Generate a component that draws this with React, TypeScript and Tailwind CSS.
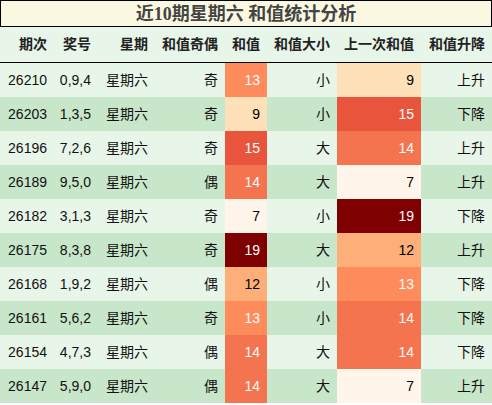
import React from "react";

type Row = {
  issue: string;
  nums: string;
  week: string;
  parity: string;
  sum: number;
  size: string;
  prev: number;
  trend: string;
};

const rows: Row[] = [
  { issue: "26210", nums: "0,9,4", week: "星期六", parity: "奇", sum: 13, size: "小", prev: 9, trend: "上升" },
  { issue: "26203", nums: "1,3,5", week: "星期六", parity: "奇", sum: 9, size: "小", prev: 15, trend: "下降" },
  { issue: "26196", nums: "7,2,6", week: "星期六", parity: "奇", sum: 15, size: "大", prev: 14, trend: "上升" },
  { issue: "26189", nums: "9,5,0", week: "星期六", parity: "偶", sum: 14, size: "大", prev: 7, trend: "上升" },
  { issue: "26182", nums: "3,1,3", week: "星期六", parity: "奇", sum: 7, size: "小", prev: 19, trend: "下降" },
  { issue: "26175", nums: "8,3,8", week: "星期六", parity: "奇", sum: 19, size: "大", prev: 12, trend: "上升" },
  { issue: "26168", nums: "1,9,2", week: "星期六", parity: "偶", sum: 12, size: "小", prev: 13, trend: "下降" },
  { issue: "26161", nums: "5,6,2", week: "星期六", parity: "奇", sum: 13, size: "小", prev: 14, trend: "下降" },
  { issue: "26154", nums: "4,7,3", week: "星期六", parity: "偶", sum: 14, size: "大", prev: 14, trend: "下降" },
  { issue: "26147", nums: "5,9,0", week: "星期六", parity: "偶", sum: 14, size: "大", prev: 7, trend: "上升" },
];

// heat cell colours, written out so tailwind picks them up
const heat: Record<number, string> = {
  7: "bg-[#fff5eb] text-black",
  9: "bg-[#fee0b9] text-black",
  12: "bg-[#fdae79] text-black",
  13: "bg-[#fd8b5b] text-white",
  14: "bg-[#f4744f] text-white",
  15: "bg-[#e8553c] text-white",
  19: "bg-[#7f0000] text-white",
};

const cols = "grid grid-cols-[54px_44px_57px_70px_42px_70px_84px_71px]";
const headers = ["期次", "奖号", "星期", "和值奇偶", "和值", "和值大小", "上一次和值", "和值升降"];

function Cell({ children, cls = "" }: { children: React.ReactNode; cls?: string }) {
  return <div className={`flex items-center justify-end pr-[7px] whitespace-nowrap ${cls}`}>{children}</div>;
}

export default function App() {
  return (
    <div className="w-[492px] h-[405px] overflow-hidden bg-white font-['Liberation_Sans','Noto_Sans_CJK_SC',sans-serif] text-[14px] text-[#111]">
      <div className="h-[27px] border border-black bg-[#faf8e1] flex items-center justify-center">
        <span className="font-['Liberation_Serif','Noto_Sans_CJK_SC',serif] font-bold text-[18px] text-[#444] leading-none">
          近10期星期六 和值统计分析
        </span>
      </div>
      <div className={`${cols} h-[36px] bg-[#e8f5e9] border-b border-black font-bold text-[#222]`}>
        {headers.map((h) => (
          <Cell key={h}>{h}</Cell>
        ))}
      </div>
      {rows.map((r, i) => (
        <div key={r.issue} className={`${cols} h-[34px] ${i % 2 === 0 ? "bg-[#e8f5e9]" : "bg-[#c8e6c9]"}`}>
          <Cell>{r.issue}</Cell>
          <Cell>{r.nums}</Cell>
          <Cell>{r.week}</Cell>
          <Cell>{r.parity}</Cell>
          <Cell cls={heat[r.sum]}>{r.sum}</Cell>
          <Cell>{r.size}</Cell>
          <Cell cls={heat[r.prev]}>{r.prev}</Cell>
          <Cell>{r.trend}</Cell>
        </div>
      ))}
    </div>
  );
}
